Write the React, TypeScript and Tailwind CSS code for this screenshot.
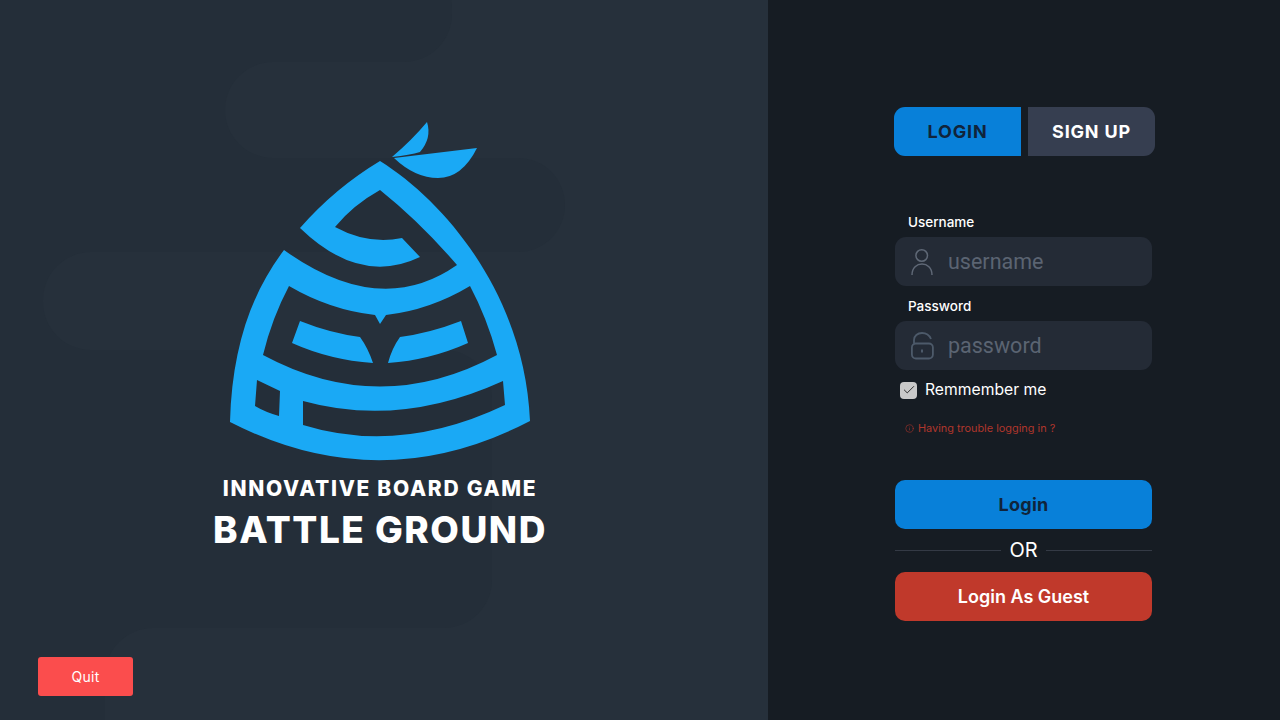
import React from 'react';
import { Check, Info } from 'lucide-react';

const Logo = () => (
  <svg width="320" height="350" viewBox="220 115 320 350" className="block">
    <path
      fill="#1aa9f5"
      fillRule="evenodd"
      d="M380 161 C450 205 525 300 530 421 Q380 499 230 422 C232 350 250 295 284 250 Q380 319 457 265 Q420 222 380 190 Q353 205 335 227 Q368 245 402 238 L420 257 Q360 286 300 228 Q335 188 380 161 Z
         M289 286 Q330 310 375 315 L380 324 L386 315 Q430 310 470 286 Q487 318 497 355 Q380 418 263 355 Q272 318 289 286 Z
         M257 380 L280 391 L279 416 Q265 412 255 406 Z
         M303 401 Q400 428 503 381 L505 405 Q400 455 303 425 Z"
    />
    <path fill="#1aa9f5" d="M300 321 Q330 333 360 337 Q368 348 373 363 Q330 360 292 343 Z" />
    <path fill="#1aa9f5" d="M461 321 Q430 333 400 337 Q392 348 388 363 Q430 360 468 343 Z" />
    <path fill="#1aa9f5" d="M427 122 Q412 140 392 157 Q410 155 420 152 Q432 138 427 122 Z" />
    <path fill="#1aa9f5" d="M394 158 L477 148 Q462 178 438 178 Q415 178 394 158 Z" />
  </svg>
);

const UserIcon = () => (
  <svg width="26" height="30" viewBox="0 0 26 30" fill="none" stroke="#5f6876" strokeWidth="1.5" className="shrink-0">
    <circle cx="13.7" cy="8.5" r="5.8" />
    <path d="M4 28 C4 20.5 9 17 14 17 C19 17 24 20.5 24 28" />
  </svg>
);

const LockIcon = () => (
  <svg width="26" height="30" viewBox="0 0 26 30" fill="none" stroke="#4d5a6a" strokeWidth="1.8" className="shrink-0">
    <rect x="3.9" y="12.5" width="21" height="15" rx="4" />
    <path d="M6 12.5 V9 C6 5 9.5 2 14 2 C18 2 21.5 4.5 23 8" />
    <path d="M14 18.5 V21.5" strokeWidth="2" />
  </svg>
);

const Field = ({ label, placeholder, icon }: { label: string; placeholder: string; icon: React.ReactNode }) => (
  <div className="w-[257px]">
    <p className="pl-[13px] text-[13.5px] leading-[18px] font-medium text-white">{label}</p>
    <div className="mt-[6px] flex h-[49px] items-center gap-[14px] rounded-[11px] bg-[#242b36] pl-[13px]">
      {icon}
      <span className="pt-[1px] font-['Roboto',sans-serif] text-[21.5px] text-[#5b6472]">{placeholder}</span>
    </div>
  </div>
);

export default function App() {
  return (
    <div className="flex h-[720px] w-[1280px] overflow-hidden font-['Inter',sans-serif]">
      <div className="relative flex w-[768px] flex-col items-center bg-[#242e39] pr-[8px]">
        {/* faint backdrop: lighter tongues from the right, darker rounded bars over them */}
        <div className="absolute top-0 right-0 bottom-0 left-[300px] bg-[#26303b]" />
        <div className="absolute top-[62px] right-0 left-[225px] h-[96px] rounded-l-[48px] bg-[#26303b]" />
        <div className="absolute top-[252px] right-0 left-[43px] h-[98px] rounded-l-[48px] bg-[#26303b]" />
        <div className="absolute top-[628px] right-0 bottom-0 left-[105px] rounded-tl-[48px] bg-[#26303b]" />
        <div className="absolute top-[-40px] left-0 h-[102px] w-[452px] rounded-r-[48px] bg-[#242e39]" />
        <div className="absolute top-[158px] left-0 h-[94px] w-[565px] rounded-r-[47px] bg-[#242e39]" />
        <div className="absolute top-[350px] left-0 h-[278px] w-[492px] rounded-r-[48px] bg-[#242e39]" />

        <div className="relative mt-[115px]">
          <Logo />
        </div>
        <h2 className="relative mt-[9px] text-[21px] leading-[30px] font-extrabold tracking-[1.7px] text-white">
          INNOVATIVE BOARD GAME
        </h2>
        <h1 className="relative mt-[4px] text-[37px] leading-[44px] font-extrabold tracking-[1.5px] text-white">
          BATTLE GROUND
        </h1>

        <div className="relative mt-auto mb-[24px] self-start pl-[38px]">
          <button className="h-[39px] w-[95px] rounded-[3px] bg-[#fb4d4d] text-[14px] tracking-[0.3px] text-white">Quit</button>
        </div>
      </div>

      <div className="flex flex-1 flex-col bg-[#161c23] pt-[107px] pl-[126px]">
        <div className="flex w-[261px] gap-[7px] text-[18px] font-bold tracking-[0.8px]">
          <div className="flex h-[49px] w-[127px] items-center justify-center rounded-l-[11px] bg-[#0880d9] text-[#10243b]">LOGIN</div>
          <div className="flex h-[49px] flex-1 items-center justify-center rounded-r-[11px] bg-[#363e50] text-white">SIGN UP</div>
        </div>

        <div className="mt-[57px] ml-[1px] flex flex-col gap-[11px]">
          <Field label="Username" placeholder="username" icon={<UserIcon />} />
          <Field label="Password" placeholder="password" icon={<LockIcon />} />
        </div>

        <label className="mt-[10px] ml-[6px] flex items-center gap-[8px] text-[15.7px] leading-[20px] text-white">
          <span className="flex h-[17px] w-[17px] items-center justify-center rounded-[4px] bg-[#c9c9c9]">
            <Check size={14} strokeWidth={1.6} className="text-[#222]" />
          </span>
          Remmember me
        </label>

        <p className="mt-[20px] ml-[11px] flex items-center gap-[4px] text-[10.9px] leading-[16px] text-[#b0362c]">
          <Info size={9} strokeWidth={1.5} />
          Having trouble logging in ?
        </p>

        <div className="mt-[44px] ml-[1px] w-[257px]">
          <button className="h-[49px] w-full rounded-[10px] bg-[#0880d9] text-[18px] font-bold tracking-[0.3px] text-[#10243b]">Login</button>
          <div className="mt-[8px] mb-[9px] flex h-[26px] items-center gap-[8px] text-[20px] text-white">
            <span className="h-px flex-1 bg-[#343a45]" />
            OR
            <span className="h-px flex-1 bg-[#343a45]" />
          </div>
          <button className="h-[49px] w-full rounded-[10px] bg-[#c0392b] text-[18px] font-semibold text-white">Login As Guest</button>
        </div>
      </div>
    </div>
  );
}
